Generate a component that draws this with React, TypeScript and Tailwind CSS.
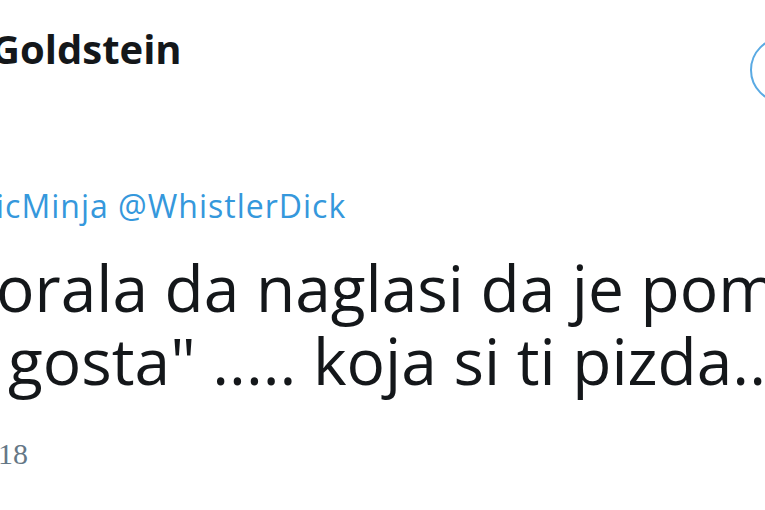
export default function App() {
  return (
    <div className="w-[765px] h-[510px] overflow-hidden bg-white text-[#14171a] font-['Open_Sans',sans-serif]">
      <div className="flex items-start justify-between pt-[29px]">
        <h1 className="-ml-[9px] text-[40px] leading-none font-bold whitespace-nowrap">
          Goldstein
        </h1>
        <button className="mt-[8px] -mr-[60px] w-[75px] h-[66px] rounded-full border-2 border-[#5aaae3]" />
      </div>

      <p className="mt-[87px] -ml-[4px] text-[32px] leading-none tracking-[1px] text-[#3598dc] whitespace-nowrap">
        icMinja @WhistlerDick
      </p>

      <div className="mt-[29px] text-[64px] leading-[73px] font-normal whitespace-nowrap">
        <p className="-ml-[4px]">orala da naglasi da je pomenula</p>
        <p className="ml-[8px]">gosta" ..... koja si ti pizda...</p>
      </div>

      <p className="mt-[42px] -ml-[2px] text-[30px] leading-none text-[#657786] font-['Liberation_Serif',serif]">
        18
      </p>
    </div>
  );
}
